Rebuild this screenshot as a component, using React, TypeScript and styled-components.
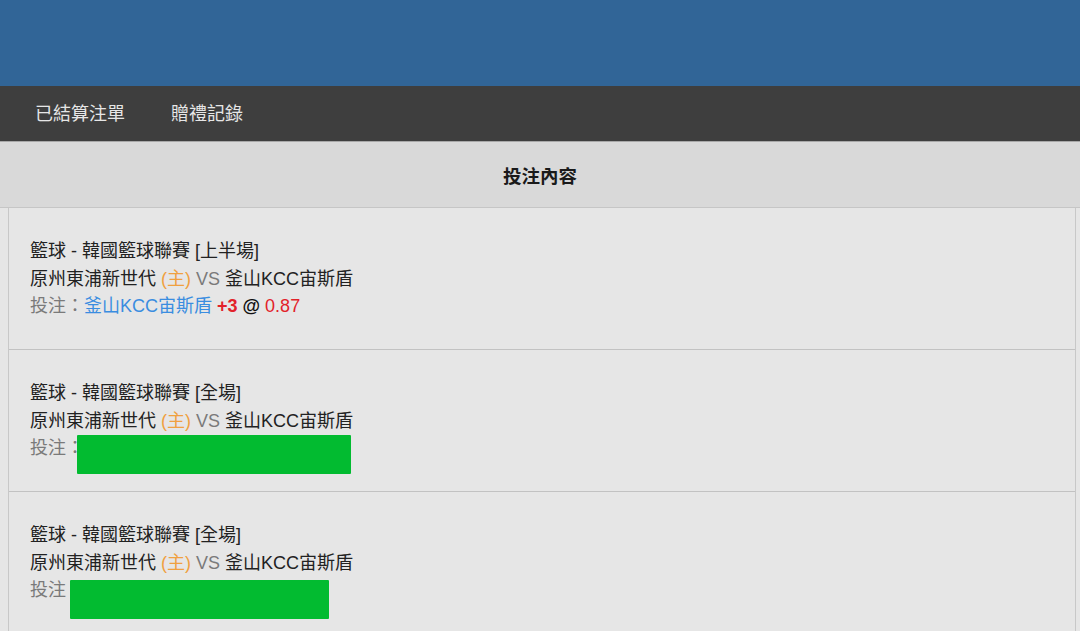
import styled, { createGlobalStyle } from 'styled-components'

const GlobalStyle = createGlobalStyle`
  html, body {
    margin: 0;
    padding: 0;
    background: #e6e6e6;
    font-family: "Liberation Sans", "Noto Sans CJK TC", sans-serif;
  }
`

const Page = styled.div`
  width: 1080px;
  height: 631px;
  overflow: hidden;
  background: #e6e6e6;
`

const TopBar = styled.div`
  height: 86px;
  background: #316597;
`

const Nav = styled.div`
  height: 55px;
  background: #3e3e3e;
  display: flex;
  align-items: center;
  padding-left: 35px;
  gap: 46px;
  border-bottom: 1px solid #a8a8a8;
`

const NavItem = styled.div`
  color: #e6e6e6;
  font-size: 18px;
  line-height: 22px;
`

const HeadRow = styled.div`
  height: 65px;
  background: #d9d9d9;
  display: flex;
  align-items: center;
  justify-content: center;
  border-bottom: 1px solid #c6c6c6;
  font-size: 18.5px;
  font-weight: bold;
  color: #1a1a1a;
`

const Rows = styled.div`
  margin: 0 4px 0 8px;
  border-left: 1px solid #c8c8c8;
  border-right: 1px solid #c8c8c8;
`

const Row = styled.div`
  height: 142px;
  box-sizing: border-box;
  padding: 2px 0 0 21px;
  border-bottom: 1px solid #c2c2c2;
  display: flex;
  flex-direction: column;
  justify-content: center;
  font-size: 18px;
  color: #222;
`

const Line = styled.div`
  display: flex;
  align-items: baseline;
  white-space: nowrap;
  height: 27.5px;
  line-height: 27.5px;
`

const Home = styled.span`
  color: #f0a040;
  margin: 0 5px;
`

const Gray = styled.span<{ $gap?: boolean }>`
  color: #7a7a7a;
  margin-right: ${p => (p.$gap ? '5px' : '0')};
`

const Team = styled.span`
  color: #3a8de0;
  margin-right: 5px;
`

const Red = styled.span<{ $bold?: boolean }>`
  color: #e2222a;
  font-weight: ${p => (p.$bold ? 'bold' : 'normal')};
`

const At = styled.span`
  color: #111;
  font-weight: bold;
  margin: 0 5px;
`

const Redact = styled.span<{ $w: number; $shift: number; $top: number }>`
  display: inline-block;
  align-self: flex-start;
  flex: none;
  height: 39px;
  width: ${p => p.$w}px;
  margin-left: ${p => p.$shift}px;
  margin-top: ${p => p.$top}px;
  background: #02bb30;
  border-radius: 1px;
`

type Bet = { period: string; redact?: { w: number; shift: number; top: number } }

const bets: Bet[] = [
  { period: '上半場' },
  { period: '全場', redact: { w: 274, shift: -7, top: 0 } },
  { period: '全場', redact: { w: 259, shift: -14, top: 3 } },
]

export default function App() {
  return (
    <>
      <GlobalStyle />
      <Page>
        <TopBar />
        <Nav>
          <NavItem>已結算注單</NavItem>
          <NavItem>贈禮記錄</NavItem>
        </Nav>
        <HeadRow>投注內容</HeadRow>
        <Rows>
          {bets.map((b, i) => (
            <Row key={i}>
              <Line>籃球 - 韓國籃球聯賽 [{b.period}]</Line>
              <Line>
                原州東浦新世代<Home>(主)</Home>
                <Gray $gap>VS</Gray>釜山KCC宙斯盾
              </Line>
              <Line>
                <Gray>投注：</Gray>
                {b.redact ? (
                  <Redact $w={b.redact.w} $shift={b.redact.shift} $top={b.redact.top} />
                ) : (
                  <>
                    <Team>釜山KCC宙斯盾</Team>
                    <Red $bold>+3</Red>
                    <At>@</At>
                    <Red>0.87</Red>
                  </>
                )}
              </Line>
            </Row>
          ))}
        </Rows>
      </Page>
    </>
  )
}
